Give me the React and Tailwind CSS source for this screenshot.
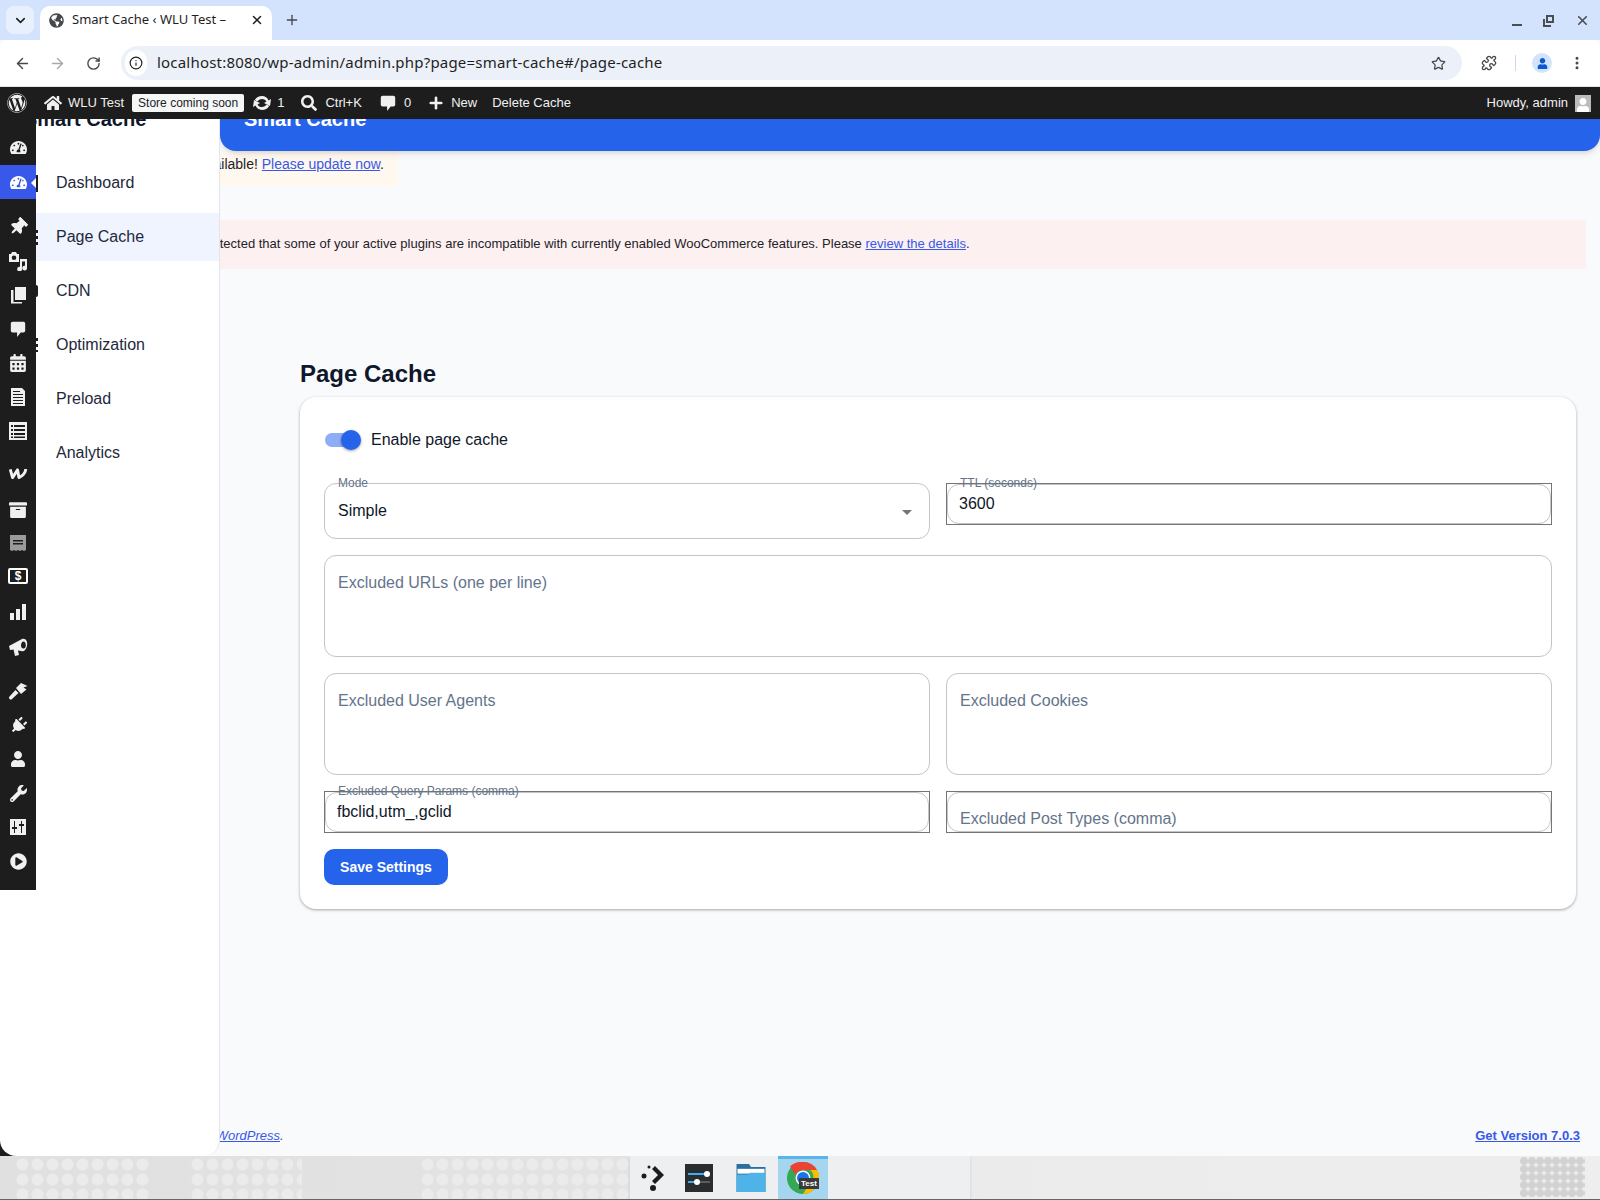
import { ArrowLeft, ArrowRight, ChevronDown, Info, MoreVertical, Plus, Puzzle, RotateCw, Star, X } from 'lucide-react';
import {
    FaArchive, FaCalendarAlt, FaGlobeAmericas, FaHome, FaPlayCircle, FaPlug,
    FaSearch, FaTachometerAlt, FaThumbtack, FaUser, FaWordpress, FaWrench,
} from 'react-icons/fa';

const Bubble = ({ className }) => (
    <svg viewBox="0 0 20 20" className={className} fill="currentColor">
        <path d="M4 2h12a2 2 0 0 1 2 2v8a2 2 0 0 1-2 2h-3l-4 5v-5H4a2 2 0 0 1-2-2V4a2 2 0 0 1 2-2z" />
    </svg>
);

const MediaIcon = () => (
    <svg viewBox="0 0 20 20" className="w-[20px] h-[20px]" fill="currentColor">
        <path fillRule="evenodd" d="M1 3h2l1-2h4l1 2h2v8H1z M6 4.500a2.300 2.300 0 1 0 0 4.600 2.300 2.300 0 0 0 0-4.600z" />
        <path d="M12 8h7v9a2.400 2.400 0 1 1-2-2.300V10.500h-3V18a2.400 2.400 0 1 1-2-2.300z" />
    </svg>
);

const PagesIcon = () => (
    <svg viewBox="0 0 20 20" className="w-[20px] h-[20px]" fill="currentColor">
        <path d="M7 2h11v13H7z" />
        <path d="M3 5h2.500v12H14v1.500H3z" />
    </svg>
);

const DocIcon = () => (
    <svg viewBox="0 0 20 20" className="w-[20px] h-[20px]" fill="currentColor">
        <path fillRule="evenodd" d="M3 1h11l3 3v15H3z M5 4v1h7V4z M5 7v1h10V7z M5 10v1h10v-1z M5 13v1h10v-1z M5 16v1h10v-1z" />
    </svg>
);

const ListIcon = () => (
    <svg viewBox="0 0 20 20" className="w-[20px] h-[20px]" fill="currentColor">
        <path fillRule="evenodd" d="M1 1h18v18H1z M3 4v2h2V4z M6 4v2h11V4z M3 8v2h2V8z M6 8v2h11V8z M3 12v2h2v-2z M6 12v2h11v-2z M3 15.500v1.500h2v-1.500z M6 15.500v1.500h11v-1.500z" />
    </svg>
);

const WooIcon = () => (
    <svg viewBox="0 0 22 14" className="w-[20px] h-[13px]" fill="none" stroke="currentColor" strokeWidth="3.2" strokeLinejoin="round">
        <path d="M2.500 2.500 L5 11.500 L10.500 3 L12 11.500 C16 10 19.500 6 19.500 2" />
    </svg>
);

const ReceiptIcon = () => (
    <svg viewBox="0 0 20 20" className="w-[20px] h-[20px]" fill="currentColor">
        <path fillRule="evenodd" d="M2 2h16v15l-2 1-2-1-2 1-2-1-2 1-2-1-2 1-2-1z M5 7v1.500h10V7z M5 10v1.500h10V10z" />
    </svg>
);

const ChartIcon = () => (
    <svg viewBox="0 0 20 20" className="w-[20px] h-[20px]" fill="currentColor">
        <path d="M2 11h4v7H2z M8 7h4v11H8z M14 2h4v16h-4z" />
    </svg>
);

const MegaphoneIcon = () => (
    <svg viewBox="0 0 20 20" className="w-[20px] h-[20px]" fill="currentColor">
        <path fillRule="evenodd" d="M1 9 L14 2 C18 1 20 5 19 9 C18 13 16 15 13 14 L10 13.500 L11 18 L7 19 L5.500 12.500 L2 13z M15.500 4.500 C14 4.500 13 6.500 13 8.500 C13 10.500 14.500 12 16 11.500 C17.500 11 18 9 17.800 7.500 C17.500 5.500 16.500 4.500 15.500 4.500z" />
    </svg>
);

const BrushIcon = () => (
    <svg viewBox="0 0 20 20" className="w-[20px] h-[20px]" fill="currentColor">
        <path d="M8 7 L13 2 L19.500 5 L15.500 6.500 L18.500 8.500 L13 13z" />
        <path d="M1.500 15.500 L7.500 9 L10.500 12 L4 18 A1.700 1.700 0 0 1 1.500 15.500z" />
    </svg>
);

const SlidersIcon = () => (
    <svg viewBox="0 0 20 20" className="w-[20px] h-[20px]" fill="currentColor">
        <path fillRule="evenodd" d="M2 2h16v16H2z M6 4v6H4v2h2v4h1v-4h2v-2H7V4z M13 4v3h-2v2h2v7h1V9h2V7h-2V4z" />
    </svg>
);

const UpdateIcon = () => (
    <svg viewBox="0 0 20 20" className="w-[20px] h-[20px]" fill="currentColor">
        <path d="M10 3c3 0 5.500 1.800 6.500 4.400L19 6l-1 7-6-3 2.500-1.400C13.800 7 12 6 10 6 8 6 6.400 7 5.500 8.500L2.800 7C4.200 4.600 6.900 3 10 3z" />
        <path d="M10 17c-3 0-5.500-1.800-6.500-4.400L1 14l1-7 6 3-2.500 1.400C6.200 13 8 14 10 14c2 0 3.600-1 4.500-2.500l2.700 1.500C15.800 15.400 13.100 17 10 17z" />
    </svg>
);

const menuIcons = [
    { key: 'home', mt: 'mt-[11px]', extra: 'mb-px', icon: <FaTachometerAlt size={17} /> },
    { key: 'smart', active: true, icon: <FaTachometerAlt size={17} /> },
    { key: 'pin', mt: 'mt-[11px]', icon: <FaThumbtack size={18} className="rotate-45" /> },
    { key: 'media', icon: <MediaIcon /> },
    { key: 'pages', icon: <PagesIcon /> },
    { key: 'comments', icon: <Bubble className="w-[18px] h-[18px]" /> },
    { key: 'calendar', icon: <FaCalendarAlt size={18} /> },
    { key: 'doc', icon: <DocIcon /> },
    { key: 'list', icon: <ListIcon /> },
    { key: 'woo', mt: 'mt-[8px]', icon: <WooIcon /> },
    { key: 'archive', mt: 'mt-[3px]', icon: <FaArchive size={18} /> },
    { key: 'receipt', icon: <span className="text-[#9a9a9a]"><ReceiptIcon /></span>, tight: true },
    {
        key: 'money',
        tight: true,
        icon: (
            <span className="w-[20px] h-[16px] border-2 border-white rounded-[2px] flex items-center justify-center text-[12px] leading-none font-bold text-white">$</span>
        ),
    },
    { key: 'chart', mt: 'mt-[2px]', icon: <ChartIcon /> },
    { key: 'megaphone', mt: 'mt-[1px]', icon: <MegaphoneIcon /> },
    { key: 'brush', mt: 'mt-[10px]', icon: <BrushIcon /> },
    { key: 'plug', icon: <FaPlug size={17} className="rotate-45" /> },
    { key: 'user', icon: <FaUser size={16} /> },
    { key: 'wrench', icon: <FaWrench size={17} /> },
    { key: 'sliders', icon: <SlidersIcon /> },
    { key: 'play', icon: <FaPlayCircle size={17} /> },
];

const navItems = ['Dashboard', 'Page Cache', 'CDN', 'Optimization', 'Preload', 'Analytics'];

const WpSidebar = () => (
    <div className="absolute left-0 top-0 w-[36px] h-[771px] bg-[#1d1d1d] text-[#f0f0f1] z-10">
        {menuIcons.map((item) => (
            <div
                key={item.key}
                className={`${item.mt || ''} ${item.extra || ''} ${item.tight ? '-mt-px' : ''} ${item.active ? 'bg-[#3858e9] text-white relative' : ''} h-[34px] flex items-center justify-center`}
            >
                {item.icon}
                {item.active && (
                    <span className="absolute right-0 top-[13px] border-y-[5px] border-r-[5px] border-y-transparent border-r-white" />
                )}
            </div>
        ))}
    </div>
);

// the plugin nav sits on top of a WP menu it doesn't push away, a few dark bits stick out
const Stray = ({ className }) => <span className={`absolute left-[36px] w-[2px] ${className}`} />;

const Outline = ({ label, children, className }) => (
    <div className={`relative rounded-[12px] border border-[#c4c4c4] ${className}`}>
        {label && (
            <span className="absolute left-[13px] -top-[9px] text-[12px] leading-[16px] text-[#64748b]">{label}</span>
        )}
        {children}
    </div>
);

// native wp-admin input drawn over the rounded outline
const SquareField = ({ label, value, placeholder }) => (
    <div className="relative h-[42px]">
        <div className="absolute inset-px rounded-[12px] border border-[#c4c4c4]" />
        <div className="absolute inset-0 border border-[#757575]" />
        {label && (
            <span className="absolute left-[14px] -top-[8px] text-[12px] leading-[16px] text-[#64748b]">{label}</span>
        )}
        {value && <span className="absolute left-[13px] top-[11px] text-[16px] leading-[20px] text-[#0f172a]">{value}</span>}
        {placeholder && <span className="absolute left-[14px] top-[18px] text-[16px] leading-[20px] text-[#64748b]">{placeholder}</span>}
    </div>
);

const TextArea = ({ label, className }) => (
    <Outline className={`h-[102px] px-[13px] pt-[15px] ${className || ''}`}>
        <span className="text-[16px] leading-[20px] text-[#64748b]">{label}</span>
    </Outline>
);

const ChromeLogo = () => (
    <svg viewBox="0 0 32 32" className="w-[32px] h-[32px]">
        <circle cx="16" cy="16" r="16" fill="#34a853" />
        <path d="M16 0a16 16 0 0 1 14 8H16a8 8 0 0 0-7.500 5L3 4.500A16 16 0 0 1 16 0z" fill="#ea4335" />
        <path d="M30 8a16 16 0 0 1-14 24l7-11a8 8 0 0 0 0-13z" fill="#fbbc04" />
        <circle cx="16" cy="16" r="7.500" fill="#fff" />
        <circle cx="16" cy="16" r="6" fill="#1a73e8" />
    </svg>
);

const Dock = () => (
    <div className="relative z-10 w-[340px] h-full bg-[#eeeff1] flex items-start pl-[5px] shadow-sm">
        <div className="w-[40px] h-[43px] flex items-center justify-center">
            <svg viewBox="0 0 28 28" className="w-[28px] h-[28px]" fill="#1c1c1c">
                <circle cx="8" cy="3" r="1.500" />
                <circle cx="3" cy="12" r="2.500" />
                <circle cx="12" cy="24" r="3" />
                <path d="M14 2l9 9-9 9-3-3 6-6-6-6z" />
            </svg>
        </div>
        <div className="ml-[10px] mt-[8px] w-[28px] h-[28px] bg-[#2a2d30] flex flex-col justify-center gap-[6px] px-[3px]">
            <div className="relative h-[2px] bg-[#5a5d60]">
                <div className="h-full w-[17px] bg-[#3daee9]" />
                <span className="absolute left-[16px] -top-[2px] w-[6px] h-[6px] rounded-full bg-white" />
            </div>
            <div className="relative h-[2px] bg-[#5a5d60]">
                <div className="h-full w-[7px] bg-[#3daee9]" />
                <span className="absolute left-[6px] -top-[2px] w-[6px] h-[6px] rounded-full bg-white" />
            </div>
        </div>
        <div className="ml-[23px] mt-[8px]">
            <svg viewBox="0 0 30 29" className="w-[30px] h-[28px]">
                <path d="M0 0h13l2 3h15v26H0z" fill="#2a6f9e" />
                <path d="M1 5h28v5H1z" fill="#fff" />
                <path d="M0 11h12l2-2h16v20H0z" fill="#4fb3e8" />
            </svg>
        </div>
        <div className="ml-[12px] w-[50px] h-full bg-[#a6d5ef] border-t-[3px] border-[#5ab4ec] relative flex justify-center pt-[3px]">
            <ChromeLogo />
            <span className="absolute left-[21px] top-[19px] h-[11px] px-[2px] bg-[#3a3a3a] text-white text-[8px] leading-[11px] font-bold">Test</span>
        </div>
    </div>
);

const Dots = ({ className }) => (
    <div className={`absolute bg-[radial-gradient(circle,#ebebeb_5.5px,transparent_6.5px)] bg-[length:15px_15px] ${className}`} />
);

const App = () => {
    return (
        <div className="relative w-[1600px] h-[1200px] overflow-hidden flex flex-col bg-[#f9fafb] font-['Liberation_Sans',Arial,sans-serif]">
            {/* browser tabs */}
            <div className="h-[40px] bg-[#d3e3fd] flex items-end pl-[6px] font-['Noto_Sans',sans-serif]">
                <div className="w-[28px] h-[28px] mb-[6px] rounded-[8px] bg-[#e9f0fd] flex items-center justify-center">
                    <ChevronDown size={15} strokeWidth={2.5} className="text-[#1f1f1f]" />
                </div>
                <div className="ml-[6px] w-[232px] h-[34px] pb-[6px] bg-white rounded-t-[10px] flex items-center pl-[9px] pr-[8px]">
                    <FaGlobeAmericas size={15} className="text-[#45474a] shrink-0" />
                    <span className="ml-[8px] text-[13px] text-[#1f1f1f] whitespace-nowrap overflow-hidden w-[170px]">Smart Cache ‹ WLU Test –</span>
                    <X size={14} strokeWidth={2.5} className="ml-[10px] text-[#1f1f1f] shrink-0" />
                </div>
                <Plus size={16} strokeWidth={2} className="ml-[12px] mb-[12px] text-[#45474a]" />
                <div className="ml-auto mb-[12px] flex items-center gap-[21px] pr-[10px] text-[#4a4d51]">
                    <span className="w-[10px] h-[2px] mt-[8px] bg-[#4a4d51]" />
                    <span className="relative w-[11px] h-[12px]">
                        <span className="absolute right-0 top-0 w-[8px] h-[8px] border-2 border-[#4a4d51]" />
                        <span className="absolute left-0 bottom-0 w-[8px] h-[8px] border-l-2 border-b-2 border-[#4a4d51]" />
                    </span>
                    <X size={15} strokeWidth={2.5} />
                </div>
            </div>
            {/* browser toolbar */}
            <div className="h-[47px] bg-white rounded-t-[8px] border-b border-[#e3e3e3] flex items-center pl-[14px] pr-[12px] font-['Noto_Sans',sans-serif]">
                <ArrowLeft size={17} strokeWidth={2} className="text-[#474747]" />
                <ArrowRight size={17} strokeWidth={2} className="ml-[18px] text-[#a8a8a8]" />
                <RotateCw size={15} strokeWidth={2.2} className="ml-[20px] text-[#474747]" />
                <div className="ml-[20px] w-[1341px] h-[34px] rounded-full bg-[#ecf1f9] flex items-center pl-[4px] pr-[16px]">
                    <div className="w-[22px] h-[26px] rounded-full bg-white flex items-center justify-center">
                        <Info size={14} strokeWidth={2} className="text-[#1f1f1f]" />
                    </div>
                    <span className="ml-[10px] -mt-[2px] text-[15px] text-[#1f1f1f] tracking-[0.2px]">localhost:8080/wp-admin/admin.php?page=smart-cache#/page-cache</span>
                    <Star size={15} strokeWidth={2} className="ml-auto text-[#474747]" />
                </div>
                <Puzzle size={16} strokeWidth={2} className="ml-[19px] text-[#474747]" />
                <span className="ml-[18px] w-px h-[16px] bg-[#c7d9f5]" />
                <div className="ml-[16px] w-[20px] h-[20px] rounded-full bg-[#d3e3fd] flex items-center justify-center">
                    <FaUser size={11} className="text-[#0b57d0]" />
                </div>
                <MoreVertical size={16} strokeWidth={2.5} className="ml-[17px] text-[#474747]" />
            </div>
            {/* admin bar */}
            <div className="relative z-20 h-[32px] bg-[#1d1d1d] flex items-center text-[13px] text-[#f0f0f1] pl-[7px] pr-[9px]">
                <FaWordpress size={20} />
                <FaHome size={18} className="ml-[17px]" />
                <span className="ml-[6px]">WLU Test</span>
                <span className="ml-[8px] h-[18px] px-[6px] bg-[#f6f7f7] rounded-[2px] text-[12px] leading-[18px] text-[#1d2327]">Store coming soon</span>
                <span className="ml-[8px]"><UpdateIcon /></span>
                <span className="ml-[5px]">1</span>
                <FaSearch size={16} className="ml-[17px]" />
                <span className="ml-[8px]">Ctrl+K</span>
                <Bubble className="ml-[17px] w-[18px] h-[18px]" />
                <span className="ml-[7px]">0</span>
                <Plus size={18} strokeWidth={3.5} className="ml-[16px]" />
                <span className="ml-[6px]">New</span>
                <span className="ml-[15px]">Delete Cache</span>
                <span className="ml-auto">Howdy, admin</span>
                <span className="ml-[7px] w-[16px] h-[17px] bg-[#bcbcbc] flex items-end justify-center overflow-hidden">
                    <FaUser size={14} className="text-white" />
                </span>
            </div>
            {/* page */}
            <div className="relative flex-1 flex overflow-hidden bg-[linear-gradient(to_right,#1d1d1d_20px,#f9fafb_20px)]">
                <WpSidebar />
                <aside className="relative shrink-0 w-[220px] bg-white border-r border-[#e2e5ea] rounded-b-[16px] pl-[36px] overflow-hidden">
                    <div className="-ml-[12px] -mt-[14px] text-[20px] leading-[28px] font-bold text-[#0f172a] whitespace-nowrap">Smart Cache</div>
                    <nav className="mt-[26px] flex flex-col gap-[6px] text-[16px] text-[#1e293b]">
                        {navItems.map((name) => (
                            <div key={name} className={`h-[48px] flex items-center pl-[20px] ${name === 'Page Cache' ? 'bg-[#eff4ff]' : ''}`}>
                                {name}
                            </div>
                        ))}
                    </nav>
                </aside>
                <Stray className="top-[56px] h-[17px] bg-[#1d1d1d]" />
                <Stray className="top-[111px] h-[15px] bg-[repeating-linear-gradient(to_bottom,#1d1d1d_0_3px,transparent_3px_6px)]" />
                <Stray className="top-[166px] h-[12px] rounded-r-full bg-[#1d1d1d]" />
                <Stray className="top-[219px] h-[14px] bg-[repeating-linear-gradient(to_bottom,#1d1d1d_0_3px,transparent_3px_6px)]" />
                <main className="relative flex-1 flex flex-col min-w-0 overflow-hidden">
                    <div className="relative z-10 shrink-0 h-[32px] bg-[#2563eb] rounded-b-[16px] pl-[24px] shadow-md">
                        <div className="-mt-[14px] text-[20px] leading-[28px] font-bold text-white">Smart Cache</div>
                    </div>
                    <div className="shrink-0 w-[178px] h-[35px] bg-[#fff8ef] flex justify-end items-start pt-[3px] pr-[14px] text-[14px] text-[#1d2327] whitespace-nowrap overflow-hidden">
                        <span>New version available! <a className="underline text-[#3858e9]">Please update now</a>.</span>
                    </div>
                    <div className="shrink-0 mt-[34px] mr-[14px] h-[49px] pb-[2px] bg-[#fcf0f1] flex items-center text-[13px] text-[#1d2327] whitespace-nowrap overflow-hidden">
                        <span className="-ml-[133px]">WooCommerce has detected that some of your active plugins are incompatible with currently enabled WooCommerce features. Please <a className="underline text-[#3858e9]">review the details</a>.</span>
                    </div>
                    <div className="pl-[80px] pr-[24px]">
                        <h1 className="mt-[89px] text-[24px] leading-[32px] font-bold text-[#0f172a]">Page Cache</h1>
                        <section className="mt-[7px] h-[512px] bg-white rounded-[16px] shadow-[0_1px_3px_rgba(0,0,0,0.35)] p-[24px]">
                            <div className="h-[38px] flex items-center">
                                <div className="relative w-[37px] h-[20px] flex items-center">
                                    <span className="w-[34px] h-[14px] ml-px rounded-full bg-[#8fadf6]" />
                                    <span className="absolute right-0 w-[20px] h-[20px] rounded-full bg-[#2563eb] shadow-[0_1px_3px_rgba(0,0,0,0.4)]" />
                                </div>
                                <span className="ml-[10px] text-[16px] text-[#0f172a]">Enable page cache</span>
                            </div>
                            <div className="mt-[24px] grid grid-cols-2 gap-x-[16px] gap-y-[16px] items-start">
                                <Outline label="Mode" className="h-[56px] flex items-center pl-[13px] pr-[17px]">
                                    <span className="text-[16px] text-[#0f172a]">Simple</span>
                                    <span className="ml-auto mt-[2px] border-x-[5px] border-t-[5px] border-x-transparent border-t-[#757575]" />
                                </Outline>
                                <SquareField label="TTL (seconds)" value="3600" />
                                <TextArea label="Excluded URLs (one per line)" className="col-span-2" />
                                <TextArea label="Excluded User Agents" />
                                <TextArea label="Excluded Cookies" />
                                <SquareField label="Excluded Query Params (comma)" value="fbclid,utm_,gclid" />
                                <SquareField placeholder="Excluded Post Types (comma)" />
                            </div>
                            <button className="mt-[16px] w-[124px] h-[36px] rounded-[10px] bg-[#2563eb] text-white text-[14px] font-bold">Save Settings</button>
                        </section>
                    </div>
                    <footer className="mt-auto h-[44px] flex justify-between items-start pt-[14px] pr-[20px] text-[13px] text-[#50575e] whitespace-nowrap">
                        <span className="-ml-[164px] italic">Thank you for creating with <a className="underline text-[#3858e9]">WordPress</a>.</span>
                        <a className="font-bold underline text-[#3858e9]">Get Version 7.0.3</a>
                    </footer>
                </main>
            </div>
            {/* desktop panel */}
            <div className="relative shrink-0 h-[44px] border-b border-[#666] bg-[linear-gradient(to_right,#e0e0e0,#e3e3e3_40%,#ebebeb_62%,#eeeeee)] flex justify-center overflow-hidden">
                <Dots className="left-[15px] top-[1px] w-[135px] h-[43px]" />
                <Dots className="left-[190px] top-[1px] w-[112px] h-[43px]" />
                <Dots className="left-[420px] top-[1px] w-[210px] h-[43px]" />
                <div className="absolute left-[1520px] top-[1px] w-[65px] h-[40px] bg-[radial-gradient(circle,#d2d2d2_3.5px,transparent_4.5px)] bg-[length:8px_8px]" />
                <Dock />
            </div>
        </div>
    );
};

export default App;
